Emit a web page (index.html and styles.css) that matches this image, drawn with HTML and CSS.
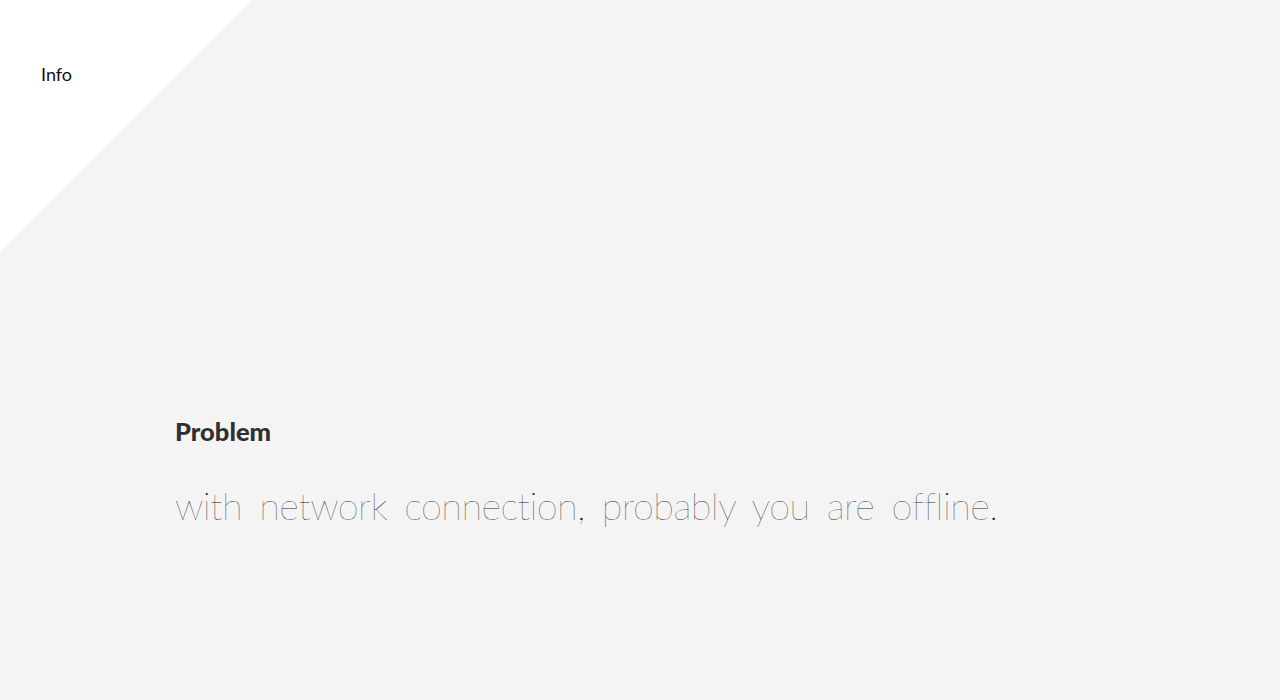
FILE: index.html
```html
<!DOCTYPE html>
<html lang="en">
<head>
<meta charset="utf-8">
<title>Info</title>
<link rel="stylesheet" href="styles.css">
</head>
<body>
<header class="top">
  <span class="brand">Info</span>
</header>
<main class="message">
  <h1 class="title">Problem</h1>
  <p class="text">with network connection, probably you are offline.</p>
</main>
</body>
</html>
```
FILE: styles.css
```css
html, body {
  margin: 0;
  padding: 0;
  height: 100%;
}
body {
  background-color: #f4f4f4;
  background-image: linear-gradient(135deg, #ffffff 50%, rgba(255,255,255,0) 50%);
  background-size: 252px 252px;
  background-repeat: no-repeat;
  font-family: "Lato", "Open Sans", sans-serif;
  color: #333;
  overflow: hidden;
}
.top {
  padding: 62px 0 0 41px;
  height: 29px;
}
.brand {
  font-family: "Lato", sans-serif;
  font-size: 18px;
  font-weight: 400;
  color: #111;
  line-height: 24px;
}
.message {
  padding: 325px 0 0 175px;
}
.title {
  margin: 0;
  font-size: 25.5px;
  font-weight: 900;
  color: #303030;
  line-height: 30px;
  letter-spacing: 0;
}
.text {
  margin: 35px 0 0 0;
  font-size: 38px;
  font-weight: 200;
  color: #1e1e1e;
  line-height: 48px;
  letter-spacing: -0.6px;
  word-spacing: 7px;
  -webkit-font-smoothing: antialiased;
}
```
